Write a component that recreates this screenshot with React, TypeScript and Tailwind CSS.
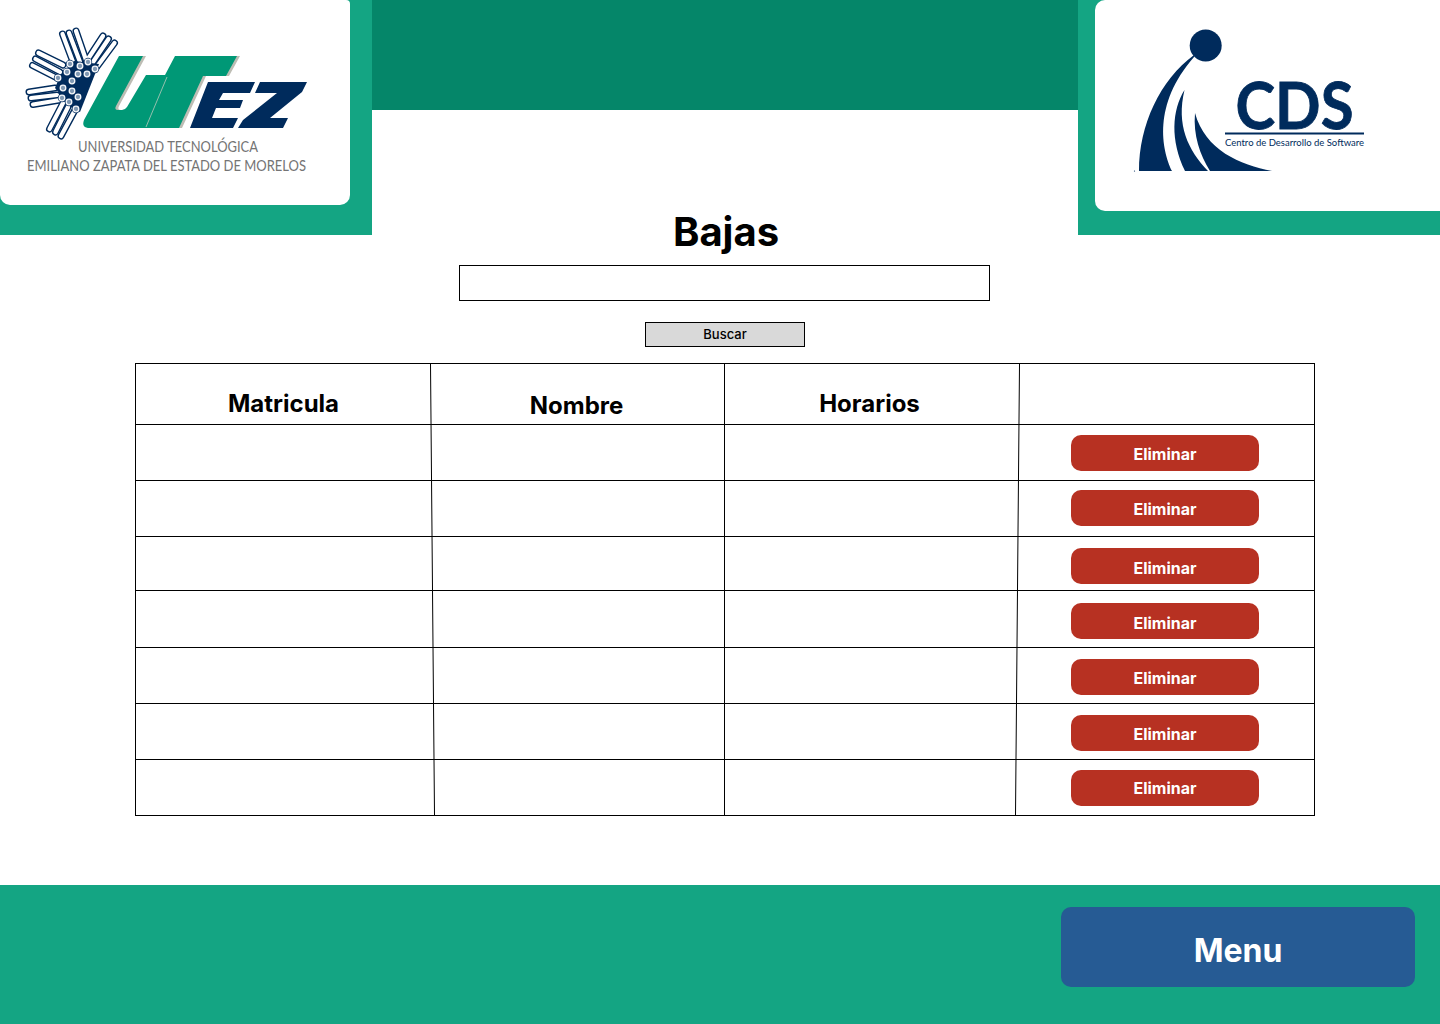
const NAVY = "#002b5c";
const GREEN_PATH =
  "M119,56 L143,56 L116,106 Q114,110 118,110 L122,110 Q125,110 127,107 L146,75 L165,75 L175,56 L237,56 L226,76 L203,76 L179,128 L90,128 Q81,128 84,120 Z";

const FINGERS: [number, number, number, number][] = [
  [62.5, 34, 73, 62], [69, 33, 80, 62], [76, 31, 86, 60],
  [103, 36, 86, 62], [108.5, 39, 91, 65], [114.5, 43, 96, 68],
  [38.5, 53, 63, 65], [35.5, 59, 60, 72], [32.5, 65.5, 57, 78],
  [29, 92, 55, 88], [31, 98, 57, 95], [33, 104.5, 60, 100],
  [49.5, 129, 63, 103], [55.5, 132, 68, 107], [61, 136, 75, 110],
];

const NODES: [number, number][] = [
  [70, 64], [80, 66], [88, 62], [67, 72], [78, 74], [87, 74], [95, 69], [58, 78],
  [72, 81], [63, 88], [72, 91], [78, 97], [62, 98], [69, 102], [76, 109],
];

function UtezLogo() {
  return (
    <svg width="350" height="205" viewBox="0 0 350 205" className="block">
      {FINGERS.map(([a, b, c, d], i) => (
        <line key={i} x1={a} y1={b} x2={c} y2={d} stroke={NAVY} strokeWidth="7" strokeLinecap="round" />
      ))}
      {FINGERS.map(([a, b, c, d], i) => (
        <line key={i} x1={a} y1={b} x2={c} y2={d} stroke="#fff" strokeWidth="4.2" strokeLinecap="round" />
      ))}
      <polygon points="74,61 99,64 80,112 72,108 55,88 60,76" fill={NAVY} />
      {NODES.map(([x, y], i) => (
        <g key={i}>
          <circle cx={x} cy={y} r="4.2" fill={NAVY} />
          <circle cx={x} cy={y} r="2.8" fill="#7f98b3" stroke="#f4f6f9" strokeWidth="1.3" />
        </g>
      ))}
      <path d={GREEN_PATH} fill="#bdbdb4" transform="translate(3,0)" />
      <path d={GREEN_PATH} fill="#009876" />
      <line x1="167" y1="77" x2="146" y2="127" stroke="#b9c9bb" strokeWidth="0.8" />
      <polygon points="208,82 255,82 250,93 223,93 219,100 243,100 240,108 216,108 212,118 238,118 233,128 190,128" fill={NAVY} />
      <polygon points="260,82 307,82 302,92 270,118 288,118 283,128 238,128 243,120 277,93 255,93" fill={NAVY} />
      <text x="78" y="151.5" textLength="180" lengthAdjust="spacingAndGlyphs" fontFamily="Lato, sans-serif" fontSize="16" fill="#747474">
        UNIVERSIDAD TECNOLÓGICA
      </text>
      <text x="27" y="171" textLength="279" lengthAdjust="spacingAndGlyphs" fontFamily="Lato, sans-serif" fontSize="16" fill="#747474">
        EMILIANO ZAPATA DEL ESTADO DE MORELOS
      </text>
    </svg>
  );
}

function CdsLogo() {
  return (
    <svg width="345" height="211" viewBox="1095 0 345 211" className="block">
      <circle cx="1205.7" cy="45.5" r="16" fill={NAVY} />
      <path d="M1194,55 C1160,80 1139,125 1139,171 L1172,171 C1162,150 1152,105 1194,57 Z" fill={NAVY} />
      <path d="M1184.5,90 C1172,110 1170,140 1185,171 L1208,171 C1188,150 1176,125 1184.5,90 Z" fill={NAVY} />
      <path d="M1195,113 C1193,135 1200,155 1210,171 L1272,171 C1240,165 1205,150 1195,113 Z" fill={NAVY} />
      <circle cx="1134.5" cy="171" r="0.6" fill={NAVY} />
      <text x="1235.5" y="128.5" textLength="118" lengthAdjust="spacingAndGlyphs" fontFamily="Lato, sans-serif" fontWeight="700" fontSize="65" fill={NAVY} stroke={NAVY} strokeWidth="0.8">
        CDS
      </text>
      <rect x="1225" y="132.5" width="139" height="2" fill={NAVY} />
      <text x="1225" y="146" textLength="139" lengthAdjust="spacingAndGlyphs" fontFamily="Lato, sans-serif" fontSize="10" fill={NAVY}>
        Centro de Desarrollo de Software
      </text>
    </svg>
  );
}

const ROWS = [
  { row: "h-[56px]", pad: "pt-[10px]", text: "leading-[38px]" },
  { row: "h-[56px]", pad: "pt-[9px]", text: "leading-[38px]" },
  { row: "h-[54px]", pad: "pt-[11px]", text: "leading-[40px]" },
  { row: "h-[57px]", pad: "pt-[12px]", text: "leading-[40px]" },
  { row: "h-[56px]", pad: "pt-[11px]", text: "leading-[38px]" },
  { row: "h-[56px]", pad: "pt-[11px]", text: "leading-[38px]" },
  { row: "h-[56px]", pad: "pt-[10px]", text: "leading-[36px]" },
];

export default function App() {
  return (
    <div className="w-[1440px] h-[1024px] overflow-hidden bg-white font-['Inter',sans-serif] text-black">
      <div className="flex items-start h-[347px]">
        <div className="w-[372px] h-[235px] bg-[#14a583]">
          <div className="w-[350px] h-[205px] bg-white rounded-b-[10px] rounded-tr-[4px]">
            <UtezLogo />
          </div>
        </div>
        <div className="flex-1 flex flex-col items-center">
          <div className="w-full h-[110px] bg-[#058669]" />
          <h1 className="mt-[98px] h-[48px] text-[40px] leading-[48px] font-bold ml-[2px]">Bajas</h1>
          <input className="mt-[9px] -ml-[2px] w-[531px] h-[36px] border border-black bg-white outline-none" aria-label="Buscar" />
          <button className="mt-[21px] w-[160px] h-[25px] border border-black bg-[#d9d9d9] pb-[2px] text-[13px] leading-[20px] font-medium">
            Buscar
          </button>
        </div>
        <div className="w-[362px] h-[235px] bg-[#14a583] pl-[17px]">
          <div className="w-[345px] h-[211px] bg-white rounded-l-[10px]">
            <CdsLogo />
          </div>
        </div>
      </div>

      <div className="relative ml-[135px] mt-[16px] w-[1180px] h-[453px] border border-black">
        <div className="flex h-[61px] border-b border-black text-[24px] leading-[29px] font-bold">
          <div className="w-[295px] text-center pt-[25px]">Matricula</div>
          <div className="w-[293px] text-center pt-[27px] -ml-[1px]">Nombre</div>
          <div className="w-[293px] text-center pt-[25px]">Horarios</div>
        </div>
        {ROWS.map((r, i) => (
          <div key={i} className={`${r.row} ${r.pad} ${i < ROWS.length - 1 ? "border-b border-black" : ""} pl-[935px]`}>
            <button className={`w-[188px] h-[36px] rounded-[10px] bg-[#b73122] text-white text-[16px] font-bold ${r.text}`}>
              Eliminar
            </button>
          </div>
        ))}
        <svg className="absolute left-0 top-0 pointer-events-none" width="1178" height="451" viewBox="0 0 1178 451">
          <line x1="294.5" y1="0" x2="298.5" y2="451" stroke="#000" strokeWidth="1" />
          <line x1="588.5" y1="0" x2="588.5" y2="451" stroke="#000" strokeWidth="1" />
          <line x1="883.5" y1="0" x2="879.5" y2="451" stroke="#000" strokeWidth="1" />
        </svg>
      </div>

      <div className="mt-[69px] h-[139px] bg-[#14a583] flex justify-end pt-[22px] pr-[25px]">
        <button className="w-[354px] h-[80px] rounded-[10px] bg-[#265b94] text-white text-[32px] leading-[88px] font-bold">
          Menu
        </button>
      </div>
    </div>
  );
}
